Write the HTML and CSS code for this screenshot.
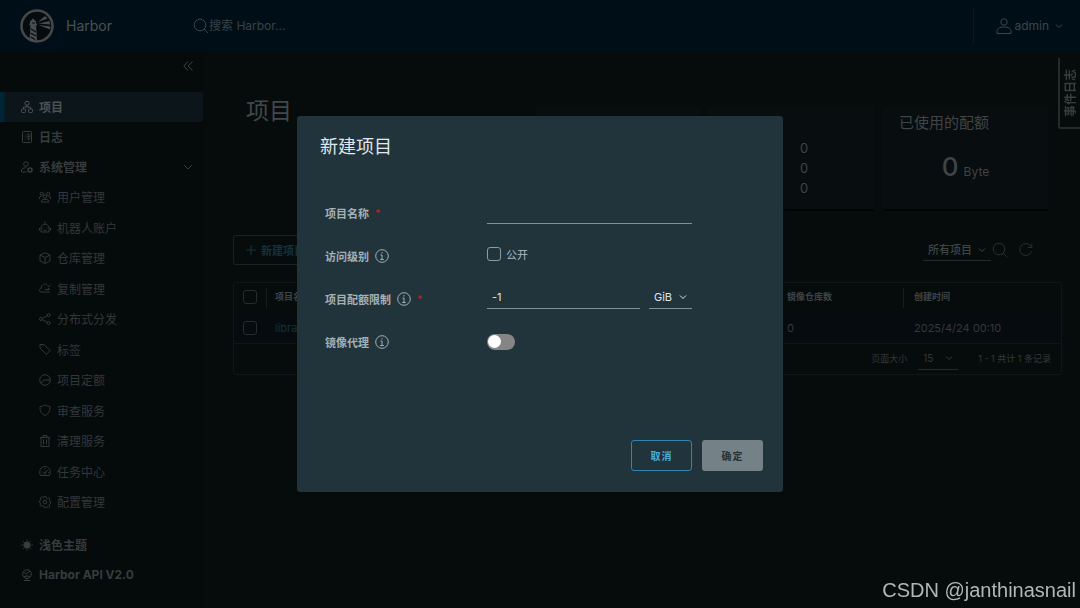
FILE: index.html
```html
<!DOCTYPE html>
<html lang="zh-CN">
<head>
    <meta charset="utf-8">
    <title>Harbor</title>
    <link rel="stylesheet" href="styles.css">
</head>
<body>
    <header class="header">
        <a href="#" class="brand">
            <svg class="logo" viewBox="0 0 34 34">
                <circle cx="17" cy="17" r="15.5" fill="#050c0f" stroke="#46494b" stroke-width="2.500"/>
                <path d="M10 14.500v-2l3-3 3 3v2h1v2h-1l1 15-4 .5-3.500-1.500 1-14h-1v-2z" fill="#4a4d4f"/>
                <path d="M18 13l7-6 2.500 2.500zM18.500 14.500l11-2.500.5 3.500zM18.500 16l12 1.500-.5 3z" fill="#4a4d4f"/>
                <path d="M12 14h3M11 20l5 3M10.500 24l5.500 3M11 28l4 2.500" stroke="#050c0f" stroke-width="1.200"/>
            </svg>
            <span>Harbor</span>
        </a>
        <form class="search">
            <svg class="icon-lg" viewBox="0 0 16 16"><circle cx="7" cy="7" r="5.800"/><path d="M11.200 11.200l4 4"/></svg>
            <input type="text" placeholder="搜索 Harbor..." aria-label="搜索 Harbor">
        </form>
        <button type="button" class="user">
            <svg class="icon-lg" viewBox="0 0 16 16"><circle cx="8" cy="4" r="3.200"/><path d="M1 13.500c0-3 2.500-4.500 7-4.500s7 1.500 7 4.500V15.500H1z"/></svg>
            <span>admin</span>
            <svg class="caret" viewBox="0 0 8 8"><path d="M1 2.500l3 3 3-3"/></svg>
        </button>
    </header>

    <div class="layout">
        <nav class="sidebar">
            <button type="button" class="collapse" aria-label="收起">
                <svg viewBox="0 0 10 10"><path d="M5 .5L.8 5 5 9.500M9.500.5L5.300 5l4.200 4.500"/></svg>
            </button>

            <a href="#" class="nav-item active">
                <svg class="icon" viewBox="0 0 12 12"><rect x="4" y=".5" width="4" height="3.500" rx="1"/><rect x=".5" y="8" width="4" height="3.500" rx="1"/><rect x="7.500" y="8" width="4" height="3.500" rx="1"/><path d="M6 4v2M2.500 8V6h7v2"/></svg>
                项目
            </a>
            <a href="#" class="nav-item">
                <svg class="icon" viewBox="0 0 12 12"><rect x="1.500" y=".5" width="9" height="11" rx="1"/><path d="M3.500 3h1M3.500 5h1M3.500 7h1M3.500 9h1M6 3h3v5H6zM6 5.500h3M7.500 3v7" stroke-width=".6"/></svg>
                日志
            </a>
            <a href="#" class="nav-item">
                <svg class="icon" viewBox="0 0 12 12"><circle cx="5" cy="3" r="2.300"/><path d="M5.500 11H.5V9c.5-1.500 2-2.300 4.500-2.300"/><circle cx="9" cy="9" r="2" stroke-width="1.600"/></svg>
                系统管理
                <svg class="toggle-caret" viewBox="0 0 10 10"><path d="M1 3l4 4 4-4"/></svg>
            </a>

            <div class="sub-nav">
                <a href="#" class="nav-item">
                    <svg class="icon" viewBox="0 0 12 12"><circle cx="2.800" cy="2.800" r="1.600"/><circle cx="9.200" cy="2.800" r="1.600"/><circle cx="6" cy="5.500" r="1.700"/><path d="M2.500 11V9.500C3 8 9 8 9.500 9.500V11zM.5 8V6l2-1M11.500 8V6l-2-1"/></svg>
                    用户管理
                </a>
                <a href="#" class="nav-item">
                    <svg class="icon" viewBox="0 0 12 12"><path d="M6 .5V3M2 11h8V7c0-5-8-5-8 0zM.5 7v2.500M11.500 7v2.500M4 6.500v1M8 6.500v1M4.500 9.300h3"/></svg>
                    机器人账户
                </a>
                <a href="#" class="nav-item">
                    <svg class="icon" viewBox="0 0 12 12"><path d="M6 .7l5 2.300v6L6 11.500 1 9V3zM1 3l5 2.500L11 3M6 5.500v6"/></svg>
                    仓库管理
                </a>
                <a href="#" class="nav-item">
                    <svg class="icon" viewBox="0 0 12 12"><path d="M11 10H2C0 10 0 6.800 2 6.500 2.200 1.500 7.500 1 8.500 3.500M11.500 3L9 4.800M6 7.500h4.500L9 6"/></svg>
                    复制管理
                </a>
                <a href="#" class="nav-item">
                    <svg class="icon" viewBox="0 0 12 12"><circle cx="2" cy="6" r="1.500"/><circle cx="9.700" cy="2" r="1.500"/><circle cx="9.700" cy="10" r="1.500"/><path d="M3.400 5.300l5-2.600M3.400 6.700l5 2.600"/></svg>
                    分布式分发
                </a>
                <a href="#" class="nav-item">
                    <svg class="icon" viewBox="0 0 12 12"><path d="M1 5V1.500h4l6 6-3.500 4zM3 3.400h.5"/></svg>
                    标签
                </a>
                <a href="#" class="nav-item">
                    <svg class="icon" viewBox="0 0 12 12"><circle cx="6" cy="6" r="5.300"/><path d="M2 9.500L5 6h6.300"/></svg>
                    项目定额
                </a>
                <a href="#" class="nav-item">
                    <svg class="icon" viewBox="0 0 12 12"><path d="M6 .7C7.500 2 9 2.300 11 2.500c.2 4-1 7-5 9-4-2-5.200-5-5-9C3 2.300 4.500 2 6 .7z"/></svg>
                    审查服务
                </a>
                <a href="#" class="nav-item">
                    <svg class="icon" viewBox="0 0 12 12"><path d="M1 2.500h10M4 2.500v-2h4v2M2 2.500v9h8v-9M4.500 4.500v5M7.500 4.500v5"/></svg>
                    清理服务
                </a>
                <a href="#" class="nav-item">
                    <svg class="icon" viewBox="0 0 12 12"><path d="M1.500 10.500c-2.500-5 1-9 4.500-9s7 4 4.500 9zM6 8l2.500-3M2.500 7h1M6 3v1M9 7.500h1"/><circle cx="5.800" cy="8" r=".8"/></svg>
                    任务中心
                </a>
                <a href="#" class="nav-item">
                    <svg class="icon" viewBox="0 0 12 12"><circle cx="6" cy="6" r="1.800"/><path d="M5 .6h2l.4 1.500 1 .4 1.400-.8 1.300 1.400-.8 1.300.4 1 1 .3v1.900l-1.200.4-.4 1 .8 1.400-1.300 1.200-1.400-.7-1 .4L7 11.500H5l-.5-1.400-1-.4-1.400.7-1.200-1.300.8-1.400-.4-1L.4 6.500v-1.700l1.300-.5.4-1-.8-1.300 1.400-1.200 1.300.7.8-.3z"/></svg>
                    配置管理
                </a>
            </div>

            <a href="#" class="nav-item">
                <svg class="icon" viewBox="0 0 12 12"><circle cx="6" cy="6" r="3.200" fill="currentColor"/><path d="M6 .2v1.300M6 10.500v1.300M.2 6h1.300M10.500 6h1.300M2 2l.8.8M9.200 9.200l.8.8M10 2l-.8.8M2.800 9.200L2 10"/></svg>
                浅色主题
            </a>
            <a href="#" class="nav-item">
                <svg class="icon" viewBox="0 0 12 12"><circle cx="6" cy="5" r="4.300"/><path d="M2.500 3l3 2L9 2M3 7.500l3-.5 3.500.5M3 11.500h6M6 9.300v2"/></svg>
                Harbor API V2.0
            </a>
        </nav>

        <main class="content">
            <section class="summary">
                <h1>项目</h1>
                <div class="card"></div>
                <div class="card counts">
                    <span>0</span>
                    <span>0</span>
                    <span>0</span>
                </div>
                <div class="card quota">
                    <h2>已使用的配额</h2>
                    <p><strong>0</strong> Byte</p>
                </div>
            </section>

            <div class="toolbar">
                <button type="button" class="btn-new">
                    <svg class="icon" viewBox="0 0 12 12"><path d="M6 1v10M1 6h10"/></svg>
                    新建项目
                </button>
                <div class="filters">
                    <div class="select-wrap">
                        <select aria-label="项目筛选"><option>所有项目</option></select>
                        <svg class="caret" viewBox="0 0 8 8"><path d="M1 2.500l3 3 3-3"/></svg>
                    </div>
                    <button type="button" class="icon-btn" aria-label="搜索">
                        <svg class="icon-lg" viewBox="0 0 16 16"><circle cx="7" cy="7" r="5.800"/><path d="M11.200 11.200l4 4"/></svg>
                    </button>
                    <button type="button" class="icon-btn" aria-label="刷新">
                        <svg class="icon-lg" viewBox="0 0 16 16"><path d="M13.500 9.500A6 6 0 1 1 13 4.500M13.800 1.500v4h-4"/></svg>
                    </button>
                </div>
            </div>

            <div class="datagrid">
                <table>
                    <colgroup>
                        <col class="col-check">
                        <col>
                        <col class="col-repos">
                        <col class="col-time">
                    </colgroup>
                    <thead>
                        <tr>
                            <th><input type="checkbox" class="check" aria-label="全选"></th>
                            <th>项目名称</th>
                            <th>镜像仓库数</th>
                            <th>创建时间</th>
                        </tr>
                    </thead>
                    <tbody>
                        <tr>
                            <td><input type="checkbox" class="check" aria-label="选择 library"></td>
                            <td><a href="#">library</a></td>
                            <td>0</td>
                            <td>2025/4/24 00:10</td>
                        </tr>
                    </tbody>
                </table>
                <div class="pager">
                    <label for="pageSize">页面大小</label>
                    <div class="select-wrap">
                        <select id="pageSize"><option>15</option></select>
                        <svg class="caret" viewBox="0 0 8 8"><path d="M1 2.500l3 3 3-3"/></svg>
                    </div>
                    <span>1 - 1 共计 1 条记录</span>
                </div>
            </div>
        </main>
    </div>

    <button type="button" class="event-tab">事件日志</button>

    <div class="backdrop">
        <div class="modal" role="dialog" aria-labelledby="modalTitle">
            <h3 id="modalTitle">新建项目</h3>
            <form class="modal-form" id="projectForm">
                <div class="form-row">
                    <label for="name">项目名称 <span class="required">*</span></label>
                    <input type="text" id="name" class="text-input">
                </div>
                <div class="form-row">
                    <label for="public">访问级别
                        <svg class="info" viewBox="0 0 14 14"><circle cx="7" cy="7" r="6.300"/><path d="M7 3.200v1.300M5.500 6H7v4.500M5.200 10.500h3.600"/></svg>
                    </label>
                    <div class="control check-control">
                        <input type="checkbox" id="public" class="check">
                        <label for="public">公开</label>
                    </div>
                </div>
                <div class="form-row">
                    <label for="quota">项目配额限制
                        <svg class="info" viewBox="0 0 14 14"><circle cx="7" cy="7" r="6.300"/><path d="M7 3.200v1.300M5.500 6H7v4.500M5.200 10.500h3.600"/></svg>
                        <span class="required">*</span>
                    </label>
                    <div class="control quota-control">
                        <input type="text" id="quota" class="text-input" value="-1">
                        <div class="select-wrap">
                            <select aria-label="单位"><option>GiB</option></select>
                            <svg class="caret" viewBox="0 0 8 8"><path d="M1 2.500l3 3 3-3"/></svg>
                        </div>
                    </div>
                </div>
                <div class="form-row">
                    <label for="proxy">镜像代理
                        <svg class="info" viewBox="0 0 14 14"><circle cx="7" cy="7" r="6.300"/><path d="M7 3.200v1.300M5.500 6H7v4.500M5.200 10.500h3.600"/></svg>
                    </label>
                    <input type="checkbox" id="proxy" class="switch" role="switch">
                </div>
            </form>
            <div class="modal-footer">
                <button type="button" class="btn btn-outline">取消</button>
                <button type="submit" form="projectForm" class="btn btn-disabled" disabled>确定</button>
            </div>
        </div>
    </div>

    <div class="watermark">CSDN @janthinasnail</div>
</body>
</html>
```
FILE: styles.css
```css
* {
    box-sizing: border-box;
}

body {
    margin: 0;
    min-height: 100vh;
    display: flex;
    flex-direction: column;
    background: #060c0c;
    color: #3f4446;
    font-family: Inter, "Noto Sans CJK SC", sans-serif;
    font-size: 12px;
}

a {
    color: inherit;
    text-decoration: none;
}

button,
input,
select {
    font: inherit;
    color: inherit;
    background: none;
    border: none;
    padding: 0;
    margin: 0;
}

svg {
    fill: none;
    stroke: currentColor;
    flex: none;
}

.icon {
    width: 12px;
    height: 12px;
    stroke-width: 1;
}

.icon-lg {
    width: 16px;
    height: 16px;
}

.caret {
    width: 8px;
    height: 8px;
}

/* header */
.header {
    display: flex;
    align-items: center;
    height: 51px;
    padding: 0 17px 0 20px;
    background: #000f17;
}

.brand {
    display: flex;
    align-items: center;
    gap: 12px;
    width: 173px;
    font-size: 14px;
    color: #4a5153;
}

.logo {
    width: 34px;
    height: 34px;
    stroke: none;
}

.search {
    display: flex;
    align-items: center;
    flex: 1;
    color: #3b4448;
}

.search input::placeholder {
    color: #384145;
    opacity: 1;
}

.user {
    display: flex;
    align-items: center;
    gap: 2px;
    height: 36px;
    padding-left: 22px;
    border-left: 1px solid #08191f;
    color: #3a464b;
}

.user .caret {
    margin-left: 4px;
}

/* sidebar */
.layout {
    display: flex;
    flex: 1;
}

.sidebar {
    display: flex;
    flex-direction: column;
    width: 203px;
    background: #050a0b;
}

.collapse {
    align-self: flex-end;
    display: flex;
    height: 41px;
    padding: 10px 10px 0 0;
}

.collapse svg {
    width: 10px;
    height: 10px;
}

.nav-item {
    display: flex;
    align-items: center;
    gap: 6px;
    height: 30px;
    padding: 0 10px 1px 21px;
    font-weight: bold;
    color: #363c3e;
}

.nav-item.active {
    background: linear-gradient(to right, #002536 3px, #0c151a 6px);
    border-radius: 0 3px 3px 0;
    color: #4c5255;
}

.toggle-caret {
    width: 10px;
    height: 10px;
    margin-left: auto;
}

.sub-nav {
    display: flex;
    flex-direction: column;
    justify-content: space-between;
    min-height: 335px;
    margin-bottom: 13px;
}

.sub-nav .nav-item {
    padding-left: 39px;
    font-weight: normal;
    color: #33383a;
}

/* content */
.content {
    flex: 1;
    padding: 56px 18px 0 30px;
}

.summary {
    display: flex;
    gap: 9px;
    height: 104px;
    padding-right: 14px;
}

.summary h1 {
    flex: 1;
    margin: 0;
    padding-left: 13px;
    font-size: 23px;
    font-weight: normal;
    line-height: 8px;
    color: #43484a;
}

.card {
    width: 165px;
    background: #080d10;
    border-bottom: 2px solid #020506;
}

.counts {
    display: flex;
    flex-direction: column;
    justify-content: center;
    gap: 4px;
    padding: 20px 0 0 91px;
    font-size: 13px;
    line-height: 16px;
}

.card.quota {
    padding: 0 16px;
    text-align: center;
}

.quota h2 {
    margin: 5px 0 17px;
    font-size: 15px;
    font-weight: normal;
    line-height: 22px;
    text-align: left;
    white-space: nowrap;
}

.quota p {
    display: flex;
    align-items: baseline;
    justify-content: center;
    gap: 5px;
    margin: 0;
    line-height: 32px;
}

.quota strong {
    font-size: 26px;
    font-weight: 500;
}

.toolbar {
    display: flex;
    justify-content: space-between;
    align-items: center;
    height: 30px;
    margin: 24px 0 17px;
}

.btn-new {
    display: flex;
    align-items: center;
    gap: 4px;
    height: 30px;
    padding: 0 11px;
    border: 1px solid #192326;
    border-radius: 3px;
    font-size: 11px;
    font-weight: bold;
    color: #14323f;
}

.filters {
    display: flex;
    align-items: center;
    gap: 10px;
    padding-right: 28px;
}

.filters .select-wrap {
    width: 68px;
    margin-right: -9px;
    font-size: 11px;
    font-weight: 500;
}

.icon-btn {
    display: flex;
    color: #2a3032;
}

.select-wrap {
    display: flex;
    align-items: center;
    height: 22px;
    padding: 0 5px;
    border-bottom: 1px solid #24292b;
}

.select-wrap select {
    appearance: none;
    flex: 1;
    min-width: 0;
    outline: none;
}

/* table */
.datagrid {
    border: 1px solid #101617;
    border-radius: 3px;
}

.datagrid table {
    width: 100%;
    table-layout: fixed;
    border-collapse: collapse;
}

.col-check {
    width: 32px;
}

.col-repos {
    width: 127px;
}

.col-time {
    width: 158px;
}

.datagrid th,
.datagrid td {
    height: 30px;
    padding: 0 0 0 11px;
    text-align: left;
    font-weight: normal;
}

.datagrid th:nth-child(-n+2),
.datagrid td:nth-child(-n+2) {
    padding-left: 9px;
}

.datagrid th {
    padding-bottom: 3px;
    font-size: 9px;
    font-weight: bold;
    background: linear-gradient(#171d1f, #171d1f) left center / 1px 20px no-repeat;
}

.datagrid th:first-child {
    background: none;
}

.datagrid td {
    font-size: 11px;
    color: #34393b;
}

.datagrid tbody tr {
    background: #060b10;
    border-bottom: 1px solid #101617;
}

.datagrid td a {
    color: #173036;
}

.check {
    appearance: none;
    display: block;
    width: 14px;
    height: 14px;
    border: 1px solid #262c2e;
    border-radius: 3px;
}

.pager {
    display: flex;
    align-items: center;
    justify-content: flex-end;
    gap: 11px;
    height: 30px;
    padding-right: 10px;
    font-size: 9px;
    color: #34393b;
}

.pager .select-wrap {
    width: 40px;
    margin-right: 9px;
    font-size: 10px;
}

/* rotated so the label reads bottom to top */
.event-tab {
    position: fixed;
    top: 58px;
    right: 0;
    width: 22px;
    height: 71px;
    border-top: 2px solid #252a2b;
    border-right: 2px solid #252a2b;
    border-radius: 0 3px 0 0;
    font-size: 12px;
    font-weight: bold;
    writing-mode: vertical-rl;
    text-orientation: sideways;
    transform: rotate(180deg);
    color: #383d3f;
}

/* dialog */
.backdrop {
    position: fixed;
    inset: 0;
    display: flex;
    align-items: center;
    justify-content: center;
}

.modal {
    width: 486px;
    padding: 19px 20px 21px 23px;
    background: #21333b;
    border-radius: 3px;
    color: #adbbc4;
}

.modal h3 {
    margin: 0 0 32px;
    font-size: 18px;
    font-weight: normal;
    line-height: 24px;
    color: #e0e8ed;
}

.modal-form {
    min-height: 249px;
    padding-left: 5px;
    font-size: 11px;
}

.form-row {
    display: grid;
    grid-template-columns: 162px 205px;
    align-items: center;
    height: 43px;
}

.form-row > label {
    display: flex;
    align-items: center;
    gap: 6px;
    font-weight: bold;
    color: #a3b1b8;
}

.form-row .required {
    color: #b3261e;
    font-size: 10px;
}

.info {
    width: 14px;
    height: 14px;
}

.text-input {
    width: 100%;
    height: 22px;
    padding: 0 5px;
    border-bottom: 1px solid #7d929b;
    outline: none;
    color: #dfe7ec;
}

.control {
    display: flex;
    align-items: center;
    gap: 5px;
}

.check-control {
    padding-bottom: 4px;
}

.modal .check {
    border-color: #8b9ba3;
}

.quota-control {
    gap: 9px;
    padding-bottom: 2px;
}

.quota-control .text-input {
    flex: 1;
    min-width: 0;
}

.modal .select-wrap {
    width: 43px;
    border-color: #7d929b;
    color: #dfe7ec;
}

.switch {
    appearance: none;
    display: flex;
    align-items: center;
    width: 28px;
    height: 16px;
    padding: 0 1px;
    border-radius: 8px;
    background: #858585;
}

.switch::before {
    content: "";
    width: 13px;
    height: 13px;
    border-radius: 50%;
    background: #fff;
}

.modal-footer {
    display: flex;
    justify-content: flex-end;
    gap: 10px;
}

.btn {
    width: 61px;
    height: 31px;
    border-radius: 3px;
    font-size: 10px;
    font-weight: bold;
    letter-spacing: 1px;
}

.btn-outline {
    border: 1px solid #2f86b0;
    color: #4aaed9;
}

.btn-disabled {
    background: #748186;
    color: #263238;
}

.watermark {
    position: fixed;
    right: 4px;
    bottom: 6px;
    font-family: "Liberation Sans", Arial, sans-serif;
    font-size: 20px;
    line-height: 24px;
    color: #b4b6b6;
}
```
